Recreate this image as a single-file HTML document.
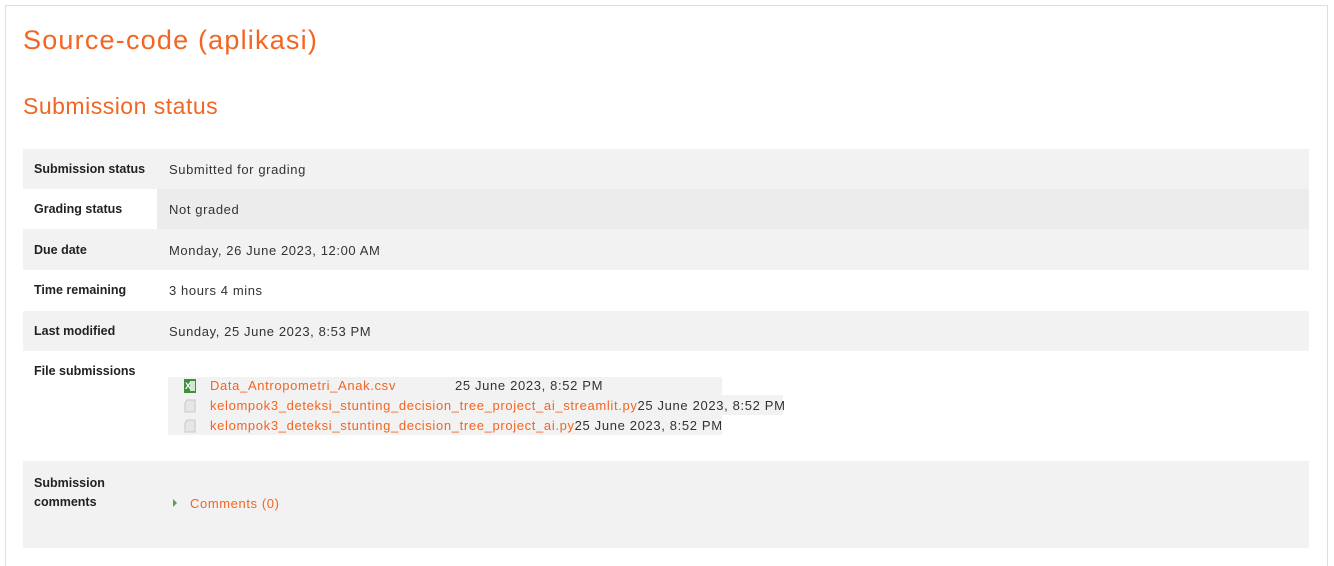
<!DOCTYPE html>
<html><head><meta charset="utf-8"><style>
body{margin:0;width:1334px;height:560px;background:#fff;font-family:"Liberation Sans",sans-serif;color:#333;overflow:hidden;position:relative}
.box{position:absolute;left:5px;top:5px;width:1321px;height:560px;border:1px solid #ddd;border-bottom:none}
.t1{position:absolute;left:23px;top:25px;font-size:27px;color:#f26522;letter-spacing:1.2px}
.t2{position:absolute;left:23px;top:93px;font-size:23px;color:#f26522;letter-spacing:0.5px}
.row{position:absolute;left:23px;width:1286px;font-size:13px}
.lab{position:absolute;left:11px;font-weight:bold;color:#222;font-size:12.5px}
.val{position:absolute;left:146px;color:#333;letter-spacing:0.6px}
.g{background:#f2f2f2}
a{color:#f26522;text-decoration:none}
.files{position:absolute;left:168px;top:377px;width:554px;height:58px;font-size:13px;letter-spacing:0.65px}
.fr{position:absolute;left:0;height:20px;background:#f2f2f2}
.f{position:absolute;left:42px;white-space:nowrap}
.ic{position:absolute;left:16px;width:12px;height:14px}
</style></head><body>
<div class="box"></div>
<div class="t1">Source-code (aplikasi)</div>
<div class="t2">Submission status</div>
<div class="row g" style="top:149px;height:40px"><span class="lab" style="top:13px">Submission status</span><span class="val" style="top:13px">Submitted for grading</span></div>
<div class="row" style="top:189px;height:40px"><div style="position:absolute;left:134px;top:0;right:0;height:40px;background:#ececec"></div><span class="lab" style="top:13px">Grading status</span><span class="val" style="top:13px">Not graded</span></div>
<div class="row g" style="top:229px;height:41px"><span class="lab" style="top:14px">Due date</span><span class="val" style="top:14px">Monday, 26 June 2023, 12:00 AM</span></div>
<div class="row" style="top:270px;height:41px"><span class="lab" style="top:13px">Time remaining</span><span class="val" style="top:13px">3 hours 4 mins</span></div>
<div class="row g" style="top:311px;height:40px"><span class="lab" style="top:13px">Last modified</span><span class="val" style="top:13px">Sunday, 25 June 2023, 8:53 PM</span></div>
<div class="row" style="top:351px;height:110px"><span class="lab" style="top:13px">File submissions</span></div>
<div class="files">
<div class="fr" style="top:0;width:554px"></div>
<div class="fr" style="top:18px;width:615px"></div>
<div class="fr" style="top:38px;width:554px"></div>
<svg class="ic" style="top:2px" viewBox="0 0 12 14"><rect x="0" y="0" width="12" height="14" fill="#3e8f3e"/><rect x="6" y="2" width="5" height="10" fill="#cfe8cf"/><text x="1" y="10" font-size="9" fill="#fff" font-family="Liberation Sans" font-weight="bold">X</text></svg>
<span class="f" style="top:1px"><a>Data_Antropometri_Anak.csv</a><span style="position:absolute;left:245px">25 June 2023, 8:52 PM</span></span>
<svg class="ic" style="top:22px" viewBox="0 0 12 14"><path d="M3 1h8v12H1V4z" fill="#e6e6e6" stroke="#c8c8c8"/></svg>
<span class="f" style="top:21px"><a>kelompok3_deteksi_stunting_decision_tree_project_ai_streamlit.py</a>25 June 2023, 8:52 PM</span>
<svg class="ic" style="top:42px" viewBox="0 0 12 14"><path d="M3 1h8v12H1V4z" fill="#e6e6e6" stroke="#c8c8c8"/></svg>
<span class="f" style="top:41px"><a>kelompok3_deteksi_stunting_decision_tree_project_ai.py</a>25 June 2023, 8:52 PM</span>
</div>
<div class="row g" style="top:461px;height:87px"><span class="lab" style="top:13px;line-height:19px">Submission<br>comments</span>
<span style="position:absolute;left:150px;top:38px;width:0;height:0;border-left:4px solid #6a9a4a;border-top:4px solid transparent;border-bottom:4px solid transparent"></span>
<a style="position:absolute;left:167px;top:35px;letter-spacing:0.6px">Comments (0)</a></div>
</body></html>
